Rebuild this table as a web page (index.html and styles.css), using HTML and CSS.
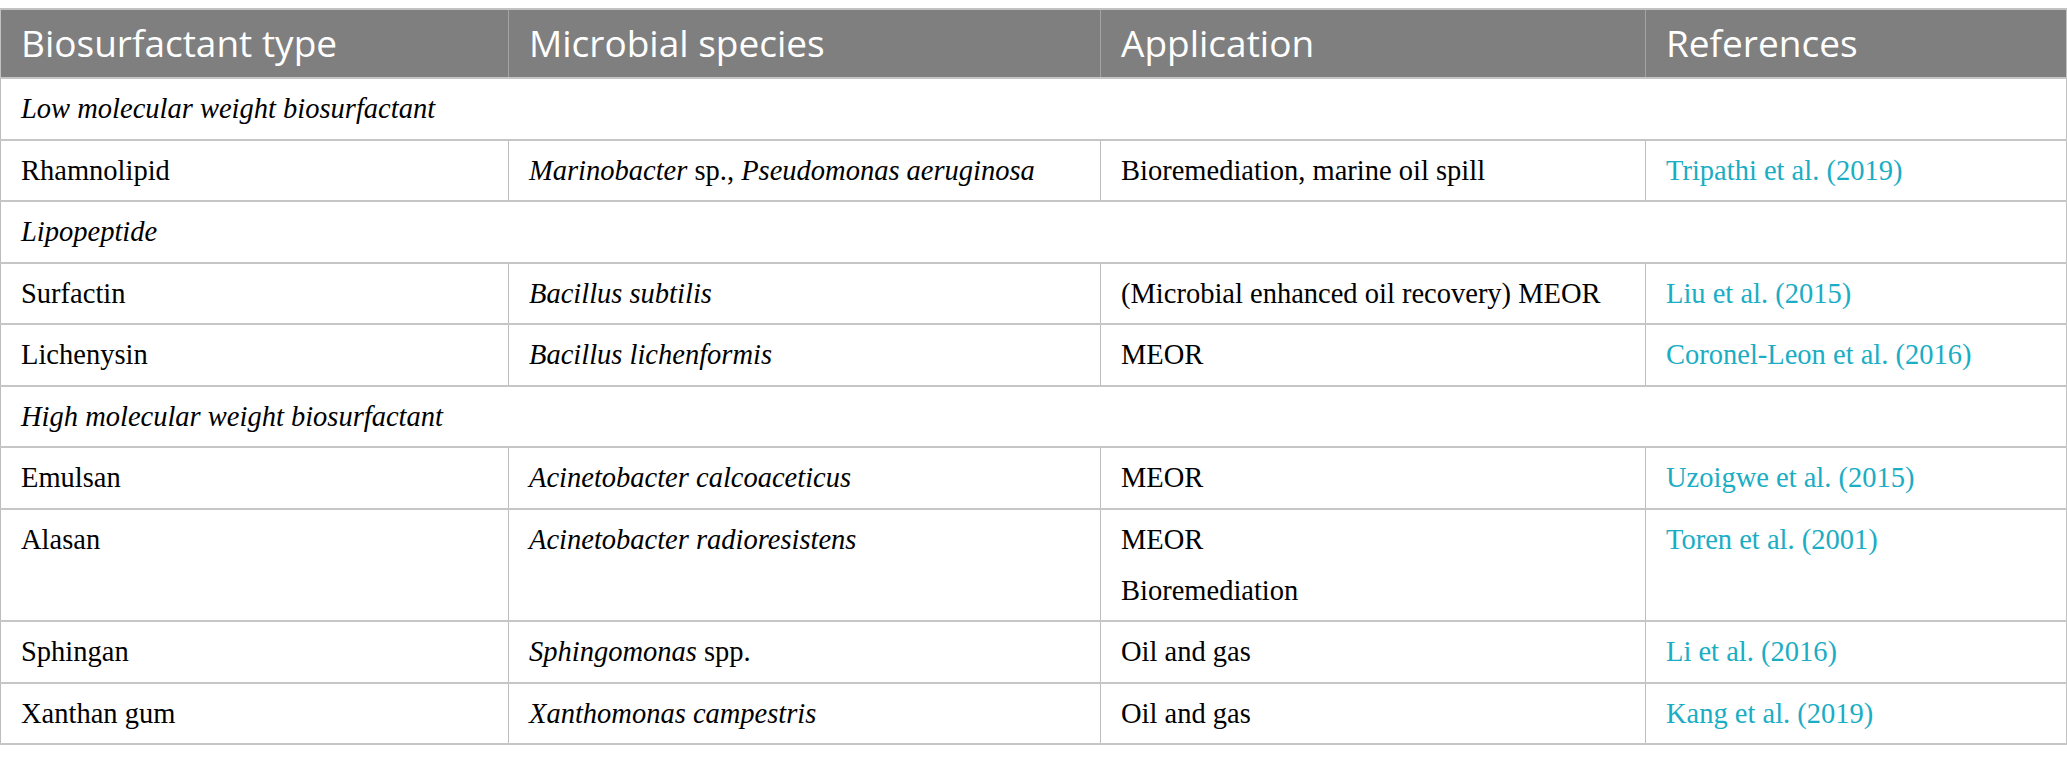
FILE: index.html
```html
<!DOCTYPE html>
<html lang="en">
<head>
    <meta charset="UTF-8">
    <meta name="viewport" content="width=device-width, initial-scale=1.0">
    <title>Biosurfactant types</title>
    <link rel="stylesheet" href="styles.css">
</head>
<body>

    <table class="data-table">
        <colgroup>
            <col class="col-type">
            <col class="col-species">
            <col class="col-app">
            <col class="col-ref">
        </colgroup>
        <thead>
            <tr>
                <th>Biosurfactant type</th>
                <th>Microbial species</th>
                <th>Application</th>
                <th>References</th>
            </tr>
        </thead>
        <tbody>
            <tr class="group-row">
                <td colspan="4"><em>Low molecular weight biosurfactant</em></td>
            </tr>
            <tr>
                <td>Rhamnolipid</td>
                <td><em>Marinobacter</em> sp., <em>Pseudomonas aeruginosa</em></td>
                <td>Bioremediation, marine oil spill</td>
                <td><a href="#">Tripathi et al. (2019)</a></td>
            </tr>
            <tr class="group-row">
                <td colspan="4"><em>Lipopeptide</em></td>
            </tr>
            <tr>
                <td>Surfactin</td>
                <td><em>Bacillus subtilis</em></td>
                <td>(Microbial enhanced oil recovery) MEOR</td>
                <td><a href="#">Liu et al. (2015)</a></td>
            </tr>
            <tr>
                <td>Lichenysin</td>
                <td><em>Bacillus lichenformis</em></td>
                <td>MEOR</td>
                <td><a href="#">Coronel-Leon et al. (2016)</a></td>
            </tr>
            <tr class="group-row">
                <td colspan="4"><em>High molecular weight biosurfactant</em></td>
            </tr>
            <tr>
                <td>Emulsan</td>
                <td><em>Acinetobacter calcoaceticus</em></td>
                <td>MEOR</td>
                <td><a href="#">Uzoigwe et al. (2015)</a></td>
            </tr>
            <tr>
                <td>Alasan</td>
                <td><em>Acinetobacter radioresistens</em></td>
                <td>
                    <p>MEOR</p>
                    <p>Bioremediation</p>
                </td>
                <td><a href="#">Toren et al. (2001)</a></td>
            </tr>
            <tr>
                <td>Sphingan</td>
                <td><em>Sphingomonas</em> spp.</td>
                <td>Oil and gas</td>
                <td><a href="#">Li et al. (2016)</a></td>
            </tr>
            <tr>
                <td>Xanthan gum</td>
                <td><em>Xanthomonas campestris</em></td>
                <td>Oil and gas</td>
                <td><a href="#">Kang et al. (2019)</a></td>
            </tr>
        </tbody>
    </table>

</body>
</html>
```

FILE: styles.css
```css
/* Global Style */
* {
    margin: 0;
    padding: 0;
    box-sizing: border-box;
}
body {
    background: #fff;
    padding-top: 8px;
    color: #000;
    font-family: 'Liberation Serif', 'Times New Roman', serif;
}

/* Tabel */
.data-table {
    width: 100%;
    border-collapse: collapse;
    table-layout: fixed;
    border: 1px solid #c2c2c2;
}
.col-type { width: 508px; }
.col-species { width: 592px; }
.col-app { width: 545px; }
.col-ref { width: auto; }

th {
    background: #7f7f7f;
    color: #fff;
    font-family: 'Open Sans', 'Noto Sans', sans-serif;
    font-weight: normal;
    font-size: 37px;
    line-height: 40px;
    text-align: left;
    padding: 13px 20px 14px;
    border-left: 1px solid #a3a3a3;
    border-top: 2px solid #c2c2c2;
}
th:first-child {
    border-left: 1px solid #c2c2c2;
}
td {
    font-size: 28.5px;
    line-height: 34px;
    padding: 13px 20px 12.5px;
    vertical-align: top;
    border-top: 2px solid #c6c6c6;
    border-left: 1px solid #bdbdbd;
    border-bottom: 2px solid #c6c6c6;
}
td p + p {
    margin-top: 17px;
}
td a {
    color: #1aadc4;
    text-decoration: none;
}
```
